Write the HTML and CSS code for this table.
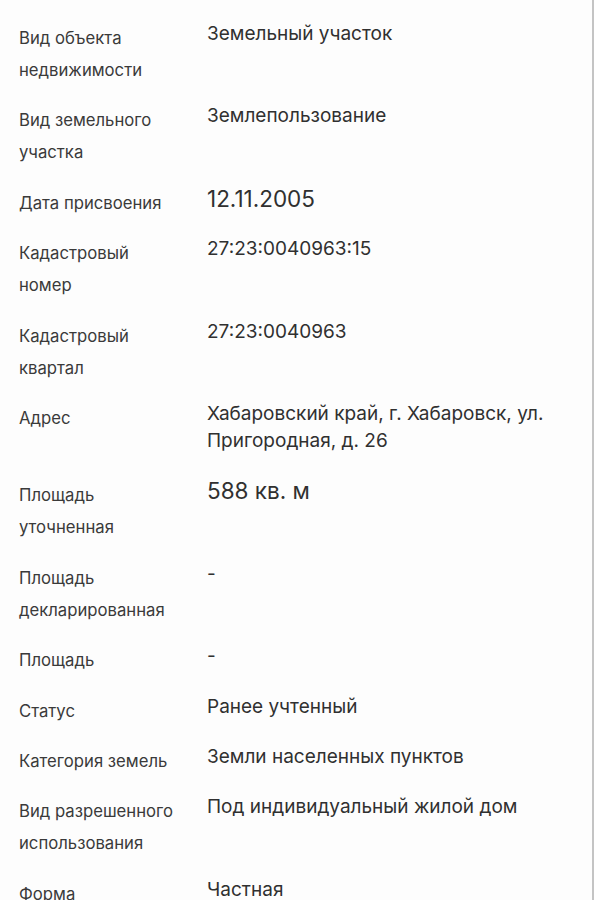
FILE: index.html
```html
<!DOCTYPE html>
<html lang="ru">
<head>
<meta charset="utf-8">
<link rel="stylesheet" href="styles.css">
</head>
<body>
<div class="page">
  <dl class="props">
    <div class="row"><dt class="label">Вид объекта недвижимости</dt><dd class="value">Земельный участок</dd></div>
    <div class="row"><dt class="label">Вид земельного участка</dt><dd class="value">Землепользование</dd></div>
    <div class="row"><dt class="label">Дата присвоения</dt><dd class="value value-lg">12.11.2005</dd></div>
    <div class="row"><dt class="label">Кадастровый номер</dt><dd class="value">27:23:0040963:15</dd></div>
    <div class="row"><dt class="label">Кадастровый квартал</dt><dd class="value">27:23:0040963</dd></div>
    <div class="row"><dt class="label">Адрес</dt><dd class="value value-multi">Хабаровский край, г. Хабаровск, ул. Пригородная, д. 26</dd></div>
    <div class="row"><dt class="label">Площадь уточненная</dt><dd class="value value-lg">588 кв. м</dd></div>
    <div class="row"><dt class="label">Площадь декларированная</dt><dd class="value">-</dd></div>
    <div class="row"><dt class="label">Площадь</dt><dd class="value">-</dd></div>
    <div class="row"><dt class="label">Статус</dt><dd class="value">Ранее учтенный</dd></div>
    <div class="row"><dt class="label">Категория земель</dt><dd class="value">Земли населенных пунктов</dd></div>
    <div class="row"><dt class="label">Вид разрешенного использования</dt><dd class="value">Под индивидуальный жилой дом</dd></div>
    <div class="row"><dt class="label">Форма собственности</dt><dd class="value">Частная</dd></div>
  </dl>
</div>
</body>
</html>
```
FILE: styles.css
```css
html, body {
  margin: 0;
  padding: 0;
  background: #fdfdfd;
}
body {
  font-family: Inter, "Noto Sans", sans-serif;
  color: #333;
  overflow: hidden;
}
.page {
  min-height: 900px;
  border-right: 2px solid #c4c4c4;
  box-sizing: border-box;
  padding: 22px 30px 0 19px;
}
.props {
  margin: 0;
  display: flex;
  flex-direction: column;
  gap: 18.4px;
}
.row {
  display: grid;
  grid-template-columns: 188px 1fr;
  align-items: start;
}
.label {
  margin: 0;
  max-width: 160px;
  font-size: 16.7px;
  line-height: 32px;
  color: #3a3a3a;
}
.value {
  margin: 0;
  margin-top: -2px;
  font-size: 19px;
  line-height: 27px;
  color: #303030;
}
.value-lg {
  font-size: 22.5px;
  line-height: 30px;
  margin-top: -3px;
}
.value-multi {
  margin-bottom: 7px;
}
```
